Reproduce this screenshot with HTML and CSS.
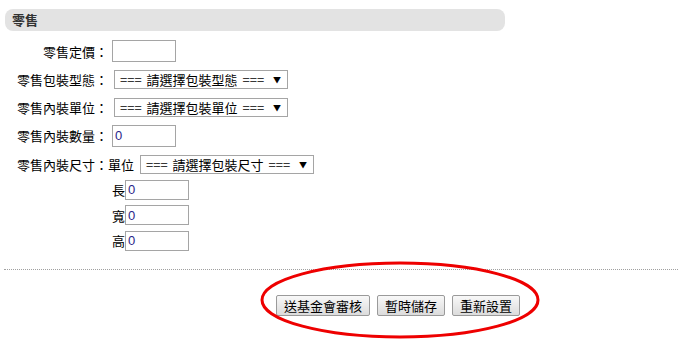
FILE: index.html
```html
<!DOCTYPE html>
<html lang="zh-Hant">
<head>
    <meta charset="UTF-8">
    <title>零售</title>
    <link rel="stylesheet" href="styles.css">
</head>
<body>

    <div class="panel">
        <div class="bar">零售</div>

        <div class="row">
            <label class="lbl">零售定價：</label>
            <input class="txt" type="text" value="">
        </div>
        <div class="row">
            <label class="lbl">零售包裝型態：</label>
            <span class="sel">=== 請選擇包裝型態 ===</span>
        </div>
        <div class="row">
            <label class="lbl">零售內裝單位：</label>
            <span class="sel">=== 請選擇包裝單位 ===</span>
        </div>
        <div class="row r4">
            <label class="lbl">零售內裝數量：</label>
            <input class="txt num" type="text" value="0">
        </div>
        <div class="row r5">
            <label class="lbl">零售內裝尺寸：</label>
            <span class="unit">單位</span>
            <span class="sel">=== 請選擇包裝尺寸 ===</span>
        </div>

        <!-- 長 寬 高 -->
        <div class="sub">
            <div class="dim"><span>長</span><input class="txt small num" type="text" value="0"></div>
            <div class="dim"><span>寬</span><input class="txt small num" type="text" value="0"></div>
            <div class="dim"><span>高</span><input class="txt small num" type="text" value="0"></div>
        </div>

        <hr class="sep">

        <div class="actions">
            <button class="btn">送基金會審核</button>
            <button class="btn">暫時儲存</button>
            <button class="btn">重新設置</button>
        </div>
    </div>

    <!-- cerchio rosso di evidenza -->
    <svg class="mark" width="290" height="84" viewBox="0 0 290 84">
        <ellipse cx="141" cy="41" rx="138" ry="37" fill="none" stroke="#ee0000" stroke-width="3"/>
    </svg>

</body>
</html>
```

FILE: styles.css
```css
* {
    margin: 0;
    padding: 0;
    box-sizing: border-box;
}

body {
    background: #ffffff;
    color: #000;
    font-family: "Noto Sans CJK TC", "Noto Sans CJK SC", sans-serif;
    font-size: 13px;
    position: relative;
    width: 689px;
    height: 351px;
    overflow: hidden;
}

.panel {
    padding: 9px 0 0 5px;
}

/* intestazione grigia */
.bar {
    width: 500px;
    height: 22px;
    line-height: 22px;
    background: #e3e3e3;
    border-radius: 8px;
    padding-left: 7px;
    font-weight: bold;
    color: #333;
    margin-bottom: 6px;
}

.row {
    display: flex;
    align-items: center;
    height: 28px;
}

.r4 {
    height: 29px;
}

.lbl {
    width: 103px;
    text-align: right;
    white-space: nowrap;
}

.txt {
    width: 64px;
    height: 22px;
    margin-left: 4px;
    border: 1px solid #a5a5a5;
    font-family: "Liberation Sans", sans-serif;
    font-size: 13px;
    padding: 0 2px;
    outline: none;
}

.num {
    color: #2a1f8a;
}

.sel {
    position: relative;
    display: inline-block;
    width: 174px;
    height: 19px;
    line-height: 17px;
    margin-left: 6px;
    border: 1px solid #a5a5a5;
    padding-left: 5px;
    white-space: nowrap;
    word-spacing: 2px;
}

.sel::after {
    content: "▼";
    position: absolute;
    right: 6px;
    top: 0;
    font-size: 8px;
}

.sub {
    padding-left: 107px;
    margin-top: -1px;
}

.dim {
    display: flex;
    align-items: center;
    height: 25.5px;
}

.dim .small {
    height: 20px;
    margin-left: 0;
}

.sep {
    border: none;
    border-top: 1px dotted #a0a0a0;
    width: 674px;
    margin-top: 15px;
    margin-left: -1px;
}

.actions {
    display: flex;
    gap: 7px;
    padding-left: 271px;
    margin-top: 25px;
}

.btn {
    height: 21px;
    padding: 0 7px;
    font-family: "Noto Sans CJK TC", sans-serif;
    font-size: 13px;
    line-height: 19px;
    color: #000;
    background: linear-gradient(#f8f8f8, #dcdcdc);
    border: 1px solid #9a9a9a;
    border-radius: 2px;
}

.mark {
    position: absolute;
    left: 259px;
    top: 259px;
}
```
